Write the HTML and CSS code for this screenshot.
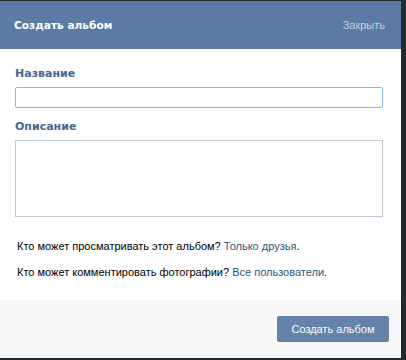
FILE: index.html
```html
<!DOCTYPE html>
<html lang="ru">
<head>
    <meta charset="UTF-8">
    <meta name="viewport" content="width=device-width, initial-scale=1.0">
    <title>Создать альбом</title>
    <link rel="stylesheet" href="styles.css">
</head>
<body>

    <div class="box">

        <div class="box-header">
            <span class="box-title">Создать альбом</span>
            <span class="box-close">Закрыть</span>
        </div>

        <div class="box-body">
            <label class="field-label" for="album-name">Название</label>
            <input class="field-input" id="album-name" type="text">

            <label class="field-label label-desc" for="album-desc">Описание</label>
            <textarea class="field-area" id="album-desc"></textarea>

            <p class="privacy first">Кто может просматривать этот альбом? <a href="#">Только друзья</a>.</p>
            <p class="privacy">Кто может комментировать фотографии? <a href="#">Все пользователи</a>.</p>
        </div>

        <div class="box-footer">
            <button class="btn-create" type="button">Создать альбом</button>
        </div>

    </div>

</body>
</html>
```

FILE: styles.css
```css
body {
    margin: 0;
    padding: 0;
    background-color: #26292c;
    font-family: "Liberation Sans", Arial, sans-serif;
    font-size: 11px;
    height: 360px;
    overflow: hidden;
}

*,
*::before,
*::after {
    box-sizing: border-box;
}

.box {
    width: 401px;
    margin-top: 1px;
    background-color: #fff;
}

.box-header {
    height: 48px;
    padding: 0 16px 0 14px;
    background-color: #5a7ba4;
    display: flex;
    align-items: center;
    justify-content: space-between;
}

.box-title {
    color: #fff;
    font-family: "DejaVu Sans", sans-serif;
    font-weight: bold;
    font-size: 10.6px;
}

.box-close {
    color: #c3d1e1;
    font-size: 11px;
}

.box-body {
    padding: 18px 15px 21px 15px;
}

.field-label {
    display: block;
    color: #45688e;
    font-family: "DejaVu Sans", sans-serif;
    font-weight: bold;
    font-size: 11px;
    line-height: 14px;
}

.label-desc {
    margin-top: 12px;
}

.field-input,
.field-area {
    display: block;
    width: 368px;
    margin: 6px 0 0 0;
    padding: 3px 4px;
    font-family: inherit;
    font-size: 11px;
    background-color: #fff;
    outline: none;
}

.field-input {
    height: 21px;
    border: 1px solid #8db3ee;
    border-radius: 2px;
}

.field-area {
    height: 77px;
    border: 1px solid #c0cad5;
    border-radius: 0;
    resize: none;
}

.privacy {
    margin: 12px 0 0 2px;
    line-height: 14px;
    color: #000;
}

.privacy.first {
    margin-top: 22px;
}

.privacy a {
    color: #2b587a;
    text-decoration: none;
}

.box-footer {
    height: 58px;
    padding: 0 12px;
    background-color: #f7f7f7;
    display: flex;
    align-items: center;
    justify-content: flex-end;
}

.btn-create {
    width: 112px;
    height: 26px;
    border: none;
    border-radius: 2px;
    background-color: #6383a8;
    color: #fff;
    font-family: "Liberation Sans", Arial, sans-serif;
    font-size: 11px;
    cursor: pointer;
}
```
